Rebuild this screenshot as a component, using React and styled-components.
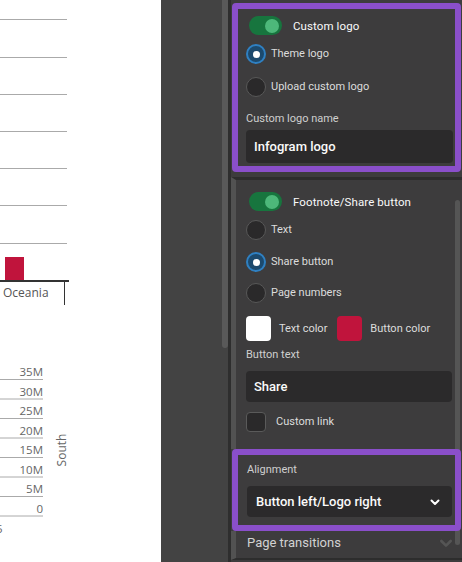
import React from 'react'
import styled, { createGlobalStyle } from 'styled-components';

const GlobalStyle = createGlobalStyle`
  html, body { margin: 0; padding: 0; background: #434343; }
  body { font-family: Roboto, "Noto Sans", sans-serif; }
`;

const topTicks = [19, 57, 94, 131, 168, 205, 243];
const southTicks = ['35M', '30M', '25M', '20M', '15M', '10M', '5M', '0'];

const Root = styled.div`
  display: flex;
  width: 462px;
  height: 562px;
  overflow: hidden;
`;

const ChartPane = styled.div`
  flex: none;
  width: 161px;
  background: #fff;
`;

const Gutter = styled.div`
  flex: none;
  width: 61px;
  background: #434343;
`;

const GutterTrack = styled.div`
  flex: none;
  width: 6px;
  background: #434343;
`;

const GutterThumb = styled.div`
  height: 348px;
  background: #595959;
  border-radius: 0 0 3px 3px;
`;

const Divider = styled.div`
  flex: none;
  width: 3px;
  background: #2e2e2e;
`;

const Panel = styled.div`
  position: relative;
  flex: 1;
  display: flex;
  flex-direction: column;
  background: #3d3c3d;
  overflow: hidden;
`;

const Highlight = styled.div`
  position: relative;
  z-index: 1;
  margin: ${p => p.$top ? '3px' : '0'} 1px 0 1px;
  border: 6px solid #8a4fca;
  border-radius: 4px;
  background: #3d3c3d;
  padding: ${p => p.$pad};
  display: flex;
  flex-direction: column;
`;

const Section = styled.div`
  margin-top: 5px;
  border-top: 3px solid #2d2d2d;
  border-left: 5px solid #525252;
  padding: 12px 10px 17px 10px;
  display: flex;
  flex-direction: column;
`;

const PanelScroll = styled.div`
  position: absolute;
  right: 2px;
  top: 200px;
  width: 5px;
  height: 345px;
  border-radius: 3px;
  background: #555;
`;

const Row = styled.div`
  display: flex;
  align-items: center;
  gap: ${p => p.$gap || 5}px;
  margin-top: ${p => p.$mt || 0}px;
`;

const Track = styled.div`
  position: relative;
  flex: none;
  width: 33px;
  height: 19px;
  margin-left: 3px;
  border-radius: 10px;
  background: #17753e;
`;

const Knob = styled.div`
  position: absolute;
  right: 3px;
  top: 2.5px;
  width: 14px;
  height: 14px;
  border-radius: 50%;
  background: #4db87a;
`;

const ToggleText = styled.span`
  margin-left: 6px;
  font-size: 11.5px;
  font-weight: 400;
  color: #fafafa;
  letter-spacing: 0.1px;
`;

const RadioDot = styled.div`
  box-sizing: border-box;
  flex: none;
  width: 20px;
  height: 20px;
  border-radius: 50%;
  display: flex;
  align-items: center;
  justify-content: center;
  background: ${p => p.$on ? '#1c4a6e' : '#2a292a'};
  border: ${p => p.$on ? '2px solid #2f80c2' : '1px solid #585858'};
  &::after {
    content: '';
    display: ${p => p.$on ? 'block' : 'none'};
    width: 7px;
    height: 7px;
    border-radius: 50%;
    background: #fff;
  }
`;

const Text = styled.span`
  font-size: 11px;
  line-height: 14px;
  color: #dcdcdc;
`;

const FieldLabel = styled.div`
  height: 14px;
  line-height: 14px;
  font-size: 11px;
  color: #cfcfcf;
  margin-top: ${p => p.$mt}px;
  padding-top: 1px;
`;

const Input = styled.div`
  box-sizing: border-box;
  height: ${p => p.$h}px;
  margin-top: ${p => p.$mt}px;
  padding: 0 11px 0 ${p => p.$pl || 8}px;
  border-radius: 4px;
  background: #2b2a2b;
  display: flex;
  align-items: center;
  justify-content: space-between;
  font-size: 13px;
  font-weight: 500;
  color: #fafafa;
`;

const Swatch = styled.div`
  flex: none;
  width: 25px;
  height: 25px;
  border-radius: 4px;
  background: ${p => p.$color};
  margin-left: ${p => p.$ml || 0}px;
`;

const Checkbox = styled.div`
  box-sizing: border-box;
  flex: none;
  width: 20px;
  height: 20px;
  border-radius: 4px;
  background: #2a292a;
  border: 1px solid #5a5a5a;
`;

const Collapsed = styled.div`
  flex: none;
  box-sizing: border-box;
  height: 29px;
  border-left: 5px solid #525252;
  border-bottom: 2px solid #2d2d2d;
  padding: 0 8px 4px 11px;
  display: flex;
  align-items: center;
  justify-content: space-between;
  font-size: 13px;
  color: #d2d2d2;
`;

const Chevron = ({ color, size }) => (
  <svg width={size} height={size} viewBox="0 0 12 12" fill="none">
    <path d="M2.5 4.5 L6 8 L9.5 4.5" stroke={color} strokeWidth="2" strokeLinecap="round" strokeLinejoin="round" />
  </svg>
);

const Toggle = ({ label }) => (
  <Row $gap={0}>
    <Track><Knob /></Track>
    <ToggleText>{label}</ToggleText>
  </Row>
);

const Radio = ({ on, label, mt }) => (
  <Row $mt={mt}>
    <RadioDot $on={on} />
    <Text>{label}</Text>
  </Row>
);

const Chart = () => (
  <svg width="161" height="562" viewBox="0 0 161 562">
    {topTicks.map(y => (
      <line key={y} x1="0" x2="67" y1={y + 0.5} y2={y + 0.5} stroke="#aaa" strokeWidth="1" />
    ))}
    <rect x="5" y="257" width="19" height="24" fill="#c0143c" />
    <line x1="0" x2="69" y1="281" y2="281" stroke="#333" strokeWidth="2" />
    <line x1="64.5" x2="64.5" y1="282" y2="305" stroke="#333" strokeWidth="1" />
    <text x="3" y="297" fontFamily="Open Sans, sans-serif" fontSize="12" fill="#555">Oceania</text>
    {southTicks.map((t, i) => (
      <g key={t}>
        <text x="43" y={376 + i * 19.5} textAnchor="end" fontFamily="Open Sans, sans-serif" fontSize="11.5" fill="#666">{t}</text>
        <line x1="0" x2="43" y1={379.5 + i * 19.5} y2={379.5 + i * 19.5} stroke="#aaa" strokeWidth="1" />
      </g>
    ))}
    <text x="66" y="450" textAnchor="middle" transform="rotate(-90 66 450)" fontFamily="Open Sans, sans-serif" fontSize="12" fill="#666">South</text>
    <text x="-4" y="533" fontFamily="Open Sans, sans-serif" fontSize="11.5" fill="#666">5</text>
  </svg>
);

export default function App() {
  return (
    <Root>
      <GlobalStyle />
      <ChartPane><Chart /></ChartPane>
      <Gutter />
      <GutterTrack><GutterThumb /></GutterTrack>
      <Divider />
      <Panel>
        <Highlight $top $pad="7px 2px 3px 8px">
          <Toggle label="Custom logo" />
          <Radio on label="Theme logo" mt={9} />
          <Radio label="Upload custom logo" mt={13} />
          <FieldLabel $mt={14}>Custom logo name</FieldLabel>
          <Input $h={33} $mt={4}>Infogram logo</Input>
        </Highlight>
        <Section>
          <Toggle label="Footnote/Share button" />
          <Radio label="Text" mt={9} />
          <Radio on label="Share button" mt={12} />
          <Radio label="Page numbers" mt={11} />
          <Row $mt={13} $gap={8}>
            <Swatch $color="#ffffff" />
            <Text>Text color</Text>
            <Swatch $color="#c0143c" $ml={2} />
            <Text>Button color</Text>
          </Row>
          <FieldLabel $mt={6}>Button text</FieldLabel>
          <Input $h={31} $mt={9}>Share</Input>
          <Row $mt={10} $gap={10}>
            <Checkbox />
            <Text>Custom link</Text>
          </Row>
        </Section>
        <Highlight $pad="8px 3px 8px 9px">
          <FieldLabel $mt={-1}>Alignment</FieldLabel>
          <Input $h={31} $mt={9} $pl={9}>
            Button left/Logo right
            <Chevron color="#fff" size={12} />
          </Input>
        </Highlight>
        <Collapsed>
          Page transitions
          <Chevron color="#555" size={16} />
        </Collapsed>
        <PanelScroll />
      </Panel>
    </Root>
  );
}
